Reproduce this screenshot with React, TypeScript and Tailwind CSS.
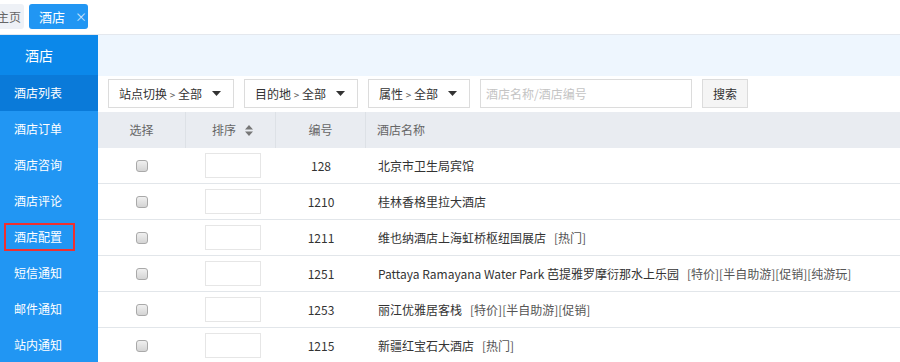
import React from 'react';

type Hotel = {
  id: number;
  name: string;
  tags?: string;
};

const hotels: Hotel[] = [
  { id: 128, name: '北京市卫生局宾馆' },
  { id: 1210, name: '桂林香格里拉大酒店' },
  { id: 1211, name: '维也纳酒店上海虹桥枢纽国展店', tags: '[热门]' },
  { id: 1251, name: 'Pattaya Ramayana Water Park 芭提雅罗摩衍那水上乐园', tags: '[特价][半自助游][促销][纯游玩]' },
  { id: 1253, name: '丽江优雅居客栈', tags: '[特价][半自助游][促销]' },
  { id: 1215, name: '新疆红宝石大酒店', tags: '[热门]' },
];

const menu = ['酒店订单', '酒店咨询', '酒店评论', '酒店配置', '短信通知', '邮件通知', '站内通知'];

const filters = [
  { label: '站点切换', width: 'w-[126px]' },
  { label: '目的地', width: 'w-[114px]' },
  { label: '属性', width: 'w-[102px]' },
];

const Caret = () => (
  <svg width="9" height="5" viewBox="0 0 9 5" className="fill-[#333]">
    <path d="M0 0h9L4.5 5z" />
  </svg>
);

const App: React.FC = () => {
  return (
    <div className="w-[900px] h-[362px] overflow-hidden bg-white text-[12px] text-[#333] font-['Microsoft_YaHei','Noto_Sans_CJK_SC',sans-serif]">
      {/* 标签栏 */}
      <div className="h-[35px] flex items-start pt-[4px] border-b border-[#e4e8ee]">
        <div className="h-[25px] w-[24px] bg-[#eef1f6] rounded-r-[3px] flex items-center justify-end pr-[3px] text-[#666] overflow-hidden whitespace-nowrap">
          主页
        </div>
        <div className="ml-[5px] h-[25px] w-[59px] bg-[#2196f3] rounded-[3px] flex items-center pl-[10px] text-white text-[13px]">
          <span>酒店</span>
          <span className="ml-[10px] text-[12px] text-[#cfe6fc]">×</span>
        </div>
      </div>

      <div className="flex">
        {/* 侧边栏 */}
        <div className="w-[98px] shrink-0 bg-[#2196f3] text-white">
          <div className="h-[40px] bg-[#0b88ea] flex items-center pl-[25px] text-[14px]">酒店</div>
          <div className="h-[36px] bg-[#0a7ad9] flex items-center pl-[14px]">酒店列表</div>
          {menu.map((item) => (
            <div key={item} className="h-[36px] flex items-center pl-[4px]">
              <div
                className={`h-[28px] flex items-center pl-[8px] w-[71px] ${item === '酒店配置' ? 'border-2 border-[#f0302f]' : 'border-2 border-transparent'}`}
              >
                {item}
              </div>
            </div>
          ))}
        </div>

        {/* 主体 */}
        <div className="flex-1">
          <div className="h-[41px] bg-[#eef6fe]" />
          <div className="h-[36px] flex items-center pl-[10px] gap-[10px] pb-[1px]">
            {filters.map((f) => (
              <div
                key={f.label}
                className={`${f.width} h-[29px] border border-[#dcdcdc] bg-white flex items-center justify-between pl-[10px] pr-[12px]`}
              >
                <span className="whitespace-pre">
                  {f.label} <span className="text-[10px] text-[#555]">&gt;</span> 全部
                </span>
                <Caret />
              </div>
            ))}
            <div className="w-[212px] h-[29px] border border-[#dcdcdc] flex items-center pl-[5px] text-[#c4c4c4]">
              酒店名称/酒店编号
            </div>
            <div className="w-[46px] h-[29px] border border-[#dcdcdc] bg-[#f5f5f5] flex items-center justify-center">
              搜索
            </div>
          </div>

          {/* 表格 */}
          <div className="grid grid-cols-[88px_90px_90px_1fr]">
            <div className="h-[36px] bg-[#e9ecf1] flex items-center justify-center text-[#666] border-r border-[#dde1e6]">选择</div>
            <div className="h-[36px] bg-[#e9ecf1] flex items-center justify-center text-[#666] border-r border-[#dde1e6] pl-[4px]">
              排序
              <svg width="8" height="11" viewBox="0 0 8 11" className="ml-[9px] fill-[#777]">
                <path d="M0 4.5L4 0l4 4.5zM0 6.5h8L4 11z" />
              </svg>
            </div>
            <div className="h-[36px] bg-[#e9ecf1] flex items-center justify-center text-[#666] border-r border-[#dde1e6]">编号</div>
            <div className="h-[36px] bg-[#e9ecf1] flex items-center pl-[11px] text-[#666]">酒店名称</div>

            {hotels.map((h) => (
              <React.Fragment key={h.id}>
                <div className="h-[36px] flex items-center justify-center border-b border-[#e2e6ea]">
                  <div className="w-[12px] h-[12px] rounded-[3px] border border-[#a9a9a9] bg-gradient-to-b from-[#f0f0f0] to-[#d4d4d4]" />
                </div>
                <div className="h-[36px] flex items-center justify-center pl-[4px] border-b border-[#e2e6ea]">
                  <div className="w-[56px] h-[25px] border border-[#e6e6e6] bg-white" />
                </div>
                <div className="h-[36px] flex items-center justify-center border-b border-[#e2e6ea]">{h.id}</div>
                <div className="h-[36px] flex items-center pl-[12px] border-b border-[#e2e6ea] whitespace-nowrap">
                  <span>{h.name}</span>
                  {h.tags && <span className="ml-[8px] text-[#555]">{h.tags}</span>}
                </div>
              </React.Fragment>
            ))}
          </div>
        </div>
      </div>
    </div>
  );
};

export default App;
